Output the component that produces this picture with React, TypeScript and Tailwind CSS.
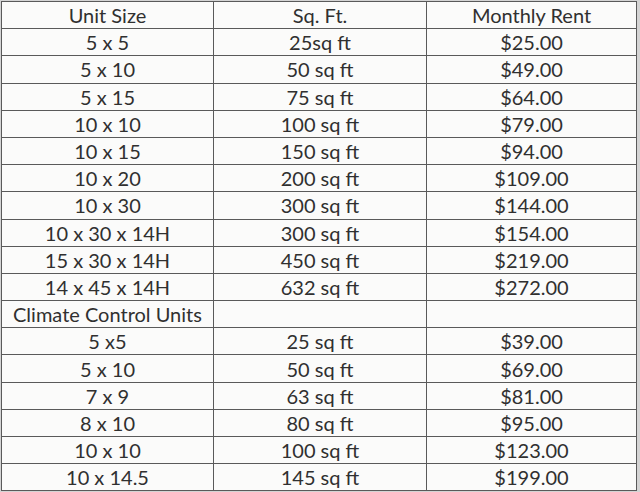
import React from 'react';

type Row = [string, string, string];

const storage: Row[] = [
  ['5 x 5', '25sq ft', '$25.00'],
  ['5 x 10', '50 sq ft', '$49.00'],
  ['5 x 15', '75 sq ft', '$64.00'],
  ['10 x 10', '100 sq ft', '$79.00'],
  ['10 x 15', '150 sq ft', '$94.00'],
  ['10 x 20', '200 sq ft', '$109.00'],
  ['10 x 30', '300 sq ft', '$144.00'],
  ['10 x 30 x 14H', '300 sq ft', '$154.00'],
  ['15 x 30 x 14H', '450 sq ft', '$219.00'],
  ['14 x 45 x 14H', '632 sq ft', '$272.00'],
];

const climate: Row[] = [
  ['5 x5', '25 sq ft', '$39.00'],
  ['5 x 10', '50 sq ft', '$69.00'],
  ['7 x 9', '63 sq ft', '$81.00'],
  ['8 x 10', '80 sq ft', '$95.00'],
  ['10 x 10', '100 sq ft', '$123.00'],
  ['10 x 14.5', '145 sq ft', '$199.00'],
];

const cell = 'border-r border-b border-[#5a5a5a] flex items-center justify-center';

const TableRow: React.FC<{ row: Row }> = ({ row }) => (
  <div className="grid grid-cols-[212px_213px_210px] h-[27.2px]">
    {row.map((text, i) => (
      <div key={i} className={cell}>
        {text}
      </div>
    ))}
  </div>
);

const App: React.FC = () => {
  return (
    <div className="w-[640px] h-[492px] bg-[#d4d4d4] pl-[1px] pt-[1px] overflow-hidden">
      <div
        className="w-[636px] bg-[#fbfbfa] border-l border-t border-[#5a5a5a] text-[#303030] text-[20px] leading-none"
        style={{ fontFamily: 'Lato, "Open Sans", sans-serif' }}
      >
        <TableRow row={['Unit Size', 'Sq. Ft.', 'Monthly Rent']} />
        {storage.map((r, i) => (
          <TableRow key={i} row={r} />
        ))}
        <div className="grid grid-cols-[212px_213px_210px] h-[27.2px]">
          <div className="border-r border-b border-[#5a5a5a] flex items-center pl-[11px]">
            Climate Control Units
          </div>
          <div className={cell} />
          <div className={cell} />
        </div>
        {climate.map((r, i) => (
          <TableRow key={i} row={r} />
        ))}
      </div>
    </div>
  );
};

export default App;
